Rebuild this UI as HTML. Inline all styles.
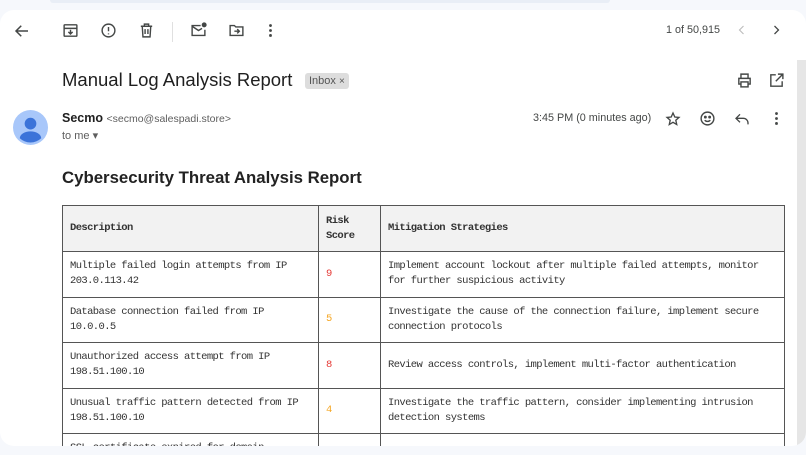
<!DOCTYPE html>
<html><head><meta charset="utf-8"><style>
*{margin:0;padding:0;box-sizing:border-box}
body{width:806px;height:455px;overflow:hidden;background:#f6f8fc;font-family:"Liberation Sans",sans-serif;position:relative}
.card{position:absolute;left:0;top:10px;width:806px;height:436px;background:#fff;border-radius:14px;overflow:hidden}
.topbar{position:absolute;left:50px;top:0;width:560px;height:3px;background:#e9eef6;border-radius:0 0 6px 6px}
.ic{position:absolute}
.g{color:#444746}
.sb{position:absolute;left:797px;top:50px;width:9px;height:396px;background:#e6e6e6}
.tw{position:absolute;left:62px;top:195px;width:724px;height:241px;overflow:hidden}
table{width:723px;border-collapse:collapse;font-family:"Liberation Mono",monospace;font-size:10.5px;letter-spacing:-0.6px;color:#333;line-height:15px;white-space:nowrap}
td,th{border:1px solid #555;padding:0 7px;vertical-align:middle;text-align:left}
th{background:#f2f2f2;font-weight:bold;height:46px}
td{height:45.5px}
</style></head><body>
<div class="topbar"></div>
<div class="card">
<svg class="ic" style="left:13px;top:12px" width="18" height="18" viewBox="0 0 24 24"><path d="M20 12H5M11 5l-7 7 7 7" stroke="#444746" stroke-width="2" fill="none"/></svg>
<svg class="ic" style="left:62px;top:12px" width="17" height="17" viewBox="0 0 24 24" fill="none" stroke="#444746" stroke-width="2"><rect x="3" y="4" width="18" height="16" rx="1"/><path d="M3 9h18M12 11v6M9 14l3 3 3-3"/></svg>
<svg class="ic" style="left:100px;top:12px" width="17" height="17" viewBox="0 0 24 24" fill="none" stroke="#444746" stroke-width="2"><circle cx="12" cy="12" r="9"/><path d="M12 7v6M12 16v1.5"/></svg>
<svg class="ic" style="left:138px;top:12px" width="17" height="17" viewBox="0 0 24 24" fill="none" stroke="#444746" stroke-width="2"><path d="M4 6h16M9 6V3h6v3M6 6l1 15h10l1-15M10 10v7M14 10v7"/></svg>
<div style="position:absolute;left:172px;top:12px;width:1px;height:20px;background:#e0e0e0"></div>
<svg class="ic" style="left:190px;top:12px" width="17" height="17" viewBox="0 0 24 24" fill="none" stroke="#444746" stroke-width="2"><path d="M15 5H3v14h18v-8"/><path d="M3 6l9 6 5-3"/><circle cx="20" cy="4" r="2.5" fill="#444746"/></svg>
<svg class="ic" style="left:228px;top:12px" width="17" height="17" viewBox="0 0 24 24" fill="none" stroke="#444746" stroke-width="2"><path d="M3 5h6l2 2h10v12H3z"/><path d="M9 13h7M13 10l3 3-3 3"/></svg>
<svg class="ic" style="left:262px;top:12px" width="17" height="17" viewBox="0 0 24 24" fill="#444746"><circle cx="12" cy="5" r="2"/><circle cx="12" cy="12" r="2"/><circle cx="12" cy="19" r="2"/></svg>
<div class="g" style="position:absolute;left:666px;top:14px;font-size:10.8px">1 of 50,915</div>
<svg class="ic" style="left:736px;top:14px" width="12" height="12" viewBox="0 0 24 24"><path d="M15 4l-8 8 8 8" stroke="#bbb" stroke-width="2.2" fill="none"/></svg>
<svg class="ic" style="left:770px;top:14px" width="12" height="12" viewBox="0 0 24 24"><path d="M9 4l8 8-8 8" stroke="#444746" stroke-width="2.5" fill="none"/></svg>
<div class="sb"></div>
<div style="position:absolute;left:62px;top:59px;font-size:18.5px;color:#1f1f1f">Manual Log Analysis Report</div>
<div style="position:absolute;left:305px;top:63px;height:16px;padding:0 4px;background:#ddd;border-radius:3px;font-size:11px;color:#555;line-height:16px">Inbox <span style="font-size:10px">×</span></div>
<svg class="ic" style="left:736px;top:62px" width="17" height="17" viewBox="0 0 24 24" fill="none" stroke="#444746" stroke-width="2"><path d="M7 8V3h10v5M7 17H4V9h16v8h-3"/><rect x="7" y="14" width="10" height="7"/></svg>
<svg class="ic" style="left:768px;top:62px" width="17" height="17" viewBox="0 0 24 24" fill="none" stroke="#444746" stroke-width="2"><path d="M11 4H4v16h16v-7M14 3h7v7M21 3l-10 10"/></svg>
<svg class="ic" style="left:13px;top:100px" width="35" height="35" viewBox="0 0 36 36"><circle cx="18" cy="18" r="18" fill="#a8c7fa"/><circle cx="18" cy="14" r="6" fill="#3b73d9"/><path d="M7 29a11 7 0 0 1 22 0a16 16 0 0 1-22 0z" fill="#3b73d9"/></svg>
<div style="position:absolute;left:62px;top:101px;font-size:12.5px;color:#1f1f1f"><b>Secmo</b> <span style="font-size:10.5px;color:#5e5e5e">&lt;secmo@salespadi.store&gt;</span></div>
<div style="position:absolute;left:62px;top:119px;font-size:11px;color:#5e5e5e">to me ▾</div>
<div class="g" style="position:absolute;left:533px;top:102px;font-size:10.8px">3:45 PM (0 minutes ago)</div>
<svg class="ic" style="left:665px;top:101px" width="16" height="16" viewBox="0 0 24 24" fill="none" stroke="#444746" stroke-width="2"><path d="M12 3l2.7 6 6.3.6-4.8 4.3 1.4 6.4L12 17l-5.6 3.3 1.4-6.4L3 9.6 9.3 9z"/></svg>
<svg class="ic" style="left:699px;top:100px" width="17" height="17" viewBox="0 0 24 24" fill="none" stroke="#444746" stroke-width="2"><circle cx="12" cy="12" r="9"/><path d="M8 14.5a5 4 0 0 0 8 0"/><circle cx="9" cy="10" r="1" fill="#444746"/><circle cx="15" cy="10" r="1" fill="#444746"/></svg>
<svg class="ic" style="left:734px;top:101px" width="16" height="16" viewBox="0 0 24 24" fill="none" stroke="#444746" stroke-width="2"><path d="M9 5L3 11l6 6M3 11h11a7 7 0 0 1 7 7v2"/></svg>
<svg class="ic" style="left:768px;top:100px" width="17" height="17" viewBox="0 0 24 24" fill="#444746"><circle cx="12" cy="5" r="2"/><circle cx="12" cy="12" r="2"/><circle cx="12" cy="19" r="2"/></svg>
<div style="position:absolute;left:62px;top:158px;font-size:16.8px;font-weight:bold;color:#222">Cybersecurity Threat Analysis Report</div>
<div class="tw"><table>
<tr><th style="width:256px">Description</th><th style="width:62px">Risk<br>Score</th><th>Mitigation Strategies</th></tr>
<tr><td>Multiple failed login attempts from IP<br>203.0.113.42</td><td style="color:#e53935">9</td><td>Implement account lockout after multiple failed attempts, monitor<br>for further suspicious activity</td></tr>
<tr><td>Database connection failed from IP<br>10.0.0.5</td><td style="color:#f5a623">5</td><td>Investigate the cause of the connection failure, implement secure<br>connection protocols</td></tr>
<tr><td>Unauthorized access attempt from IP<br>198.51.100.10</td><td style="color:#e53935">8</td><td>Review access controls, implement multi-factor authentication</td></tr>
<tr><td>Unusual traffic pattern detected from IP<br>198.51.100.10</td><td style="color:#f5a623">4</td><td>Investigate the traffic pattern, consider implementing intrusion<br>detection systems</td></tr>
<tr><td>SSL certificate expired for domain<br>example.com</td><td>6</td><td>Renew certificate</td></tr>
</table></div>
</div>
</body></html>
